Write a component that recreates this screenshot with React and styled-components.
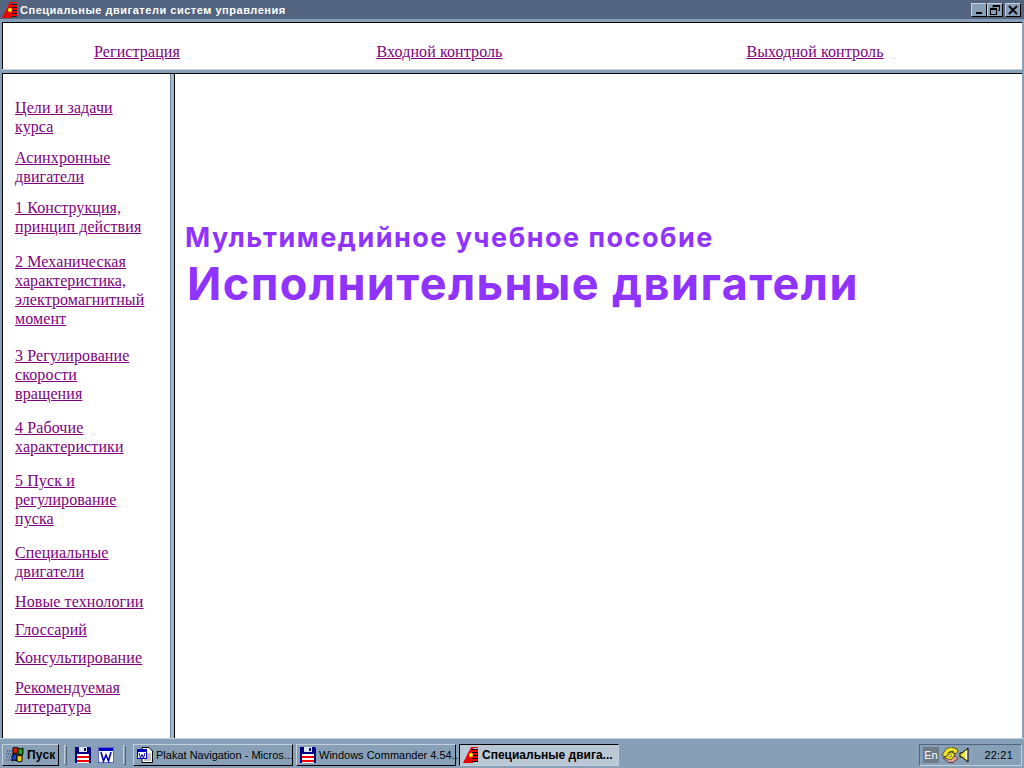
import React from 'react';
import styled, { createGlobalStyle } from 'styled-components';

const GlobalStyle = createGlobalStyle`
  html, body {
    margin: 0;
    padding: 0;
    overflow: hidden;
    background: #87a0b8;
  }
  svg {
    flex: none;
    display: block;
  }
`;

const Screen = styled.div`
  width: 1024px;
  height: 768px;
  display: flex;
  flex-direction: column;
  background: #87a0b8;
  overflow: hidden;
`;

const TitleBar = styled.div`
  height: 19px;
  flex: none;
  display: flex;
  align-items: center;
  padding: 0 3px 0 2px;
  background: #52647f;
  color: #fff;
  font: bold 11px "Liberation Sans", sans-serif;
  letter-spacing: 0.52px;
`;

const TitleText = styled.span`
  margin-left: 2px;
  flex: 1;
`;

const WinButton = styled.div`
  width: 16px;
  height: 14px;
  margin-left: ${(p) => p.$gap || 0}px;
  background: #87a0b8;
  box-sizing: border-box;
  border: 1px solid;
  border-color: #c4d0dc #000 #000 #c4d0dc;
  display: flex;
  align-items: center;
  justify-content: center;
`;

const Frame = styled.div`
  flex: 1;
  display: flex;
  flex-direction: column;
  padding: 0 2px;
  min-height: 0;
`;

const TopFrame = styled.div`
  height: 46px;
  flex: none;
  margin-top: 3px;
  background: #fff;
  border-top: 1px solid #000;
  border-left: 1px solid #000;
  display: grid;
  grid-template-columns: 268px 337px 1fr;
  align-items: center;
`;

const TopCell = styled.div`
  text-align: center;
  padding-top: 11px;
  font: 16px/19px "Liberation Serif", serif;
`;

const HDivider = styled.div`
  height: 3px;
  flex: none;
  background: #87a0b8;
  border-top: 1px solid #c4d0dc;
  border-bottom: 1px solid #000;
`;

const Panes = styled.div`
  flex: 1;
  display: flex;
  min-height: 0;
`;

const SidePane = styled.nav`
  width: 168px;
  flex: none;
  background: #fff;
  border-left: 1px solid #000;
  padding: 24px 0 0 12px;
  box-sizing: border-box;
`;

const VDivider = styled.div`
  width: 5px;
  flex: none;
  box-sizing: border-box;
  background: #a6b9cb;
  border-left: 1px solid #6f88a2;
  border-right: 1px solid #000;
`;

const MainPane = styled.main`
  flex: 1;
  background: #fff;
  padding-top: 148px;
`;

const NavItem = styled.div`
  margin-top: ${(p) => p.$gap}px;
  font: 16px/19px "Liberation Serif", serif;
`;

const NavLink = styled.a`
  color: #800080;
  text-decoration: underline;
  letter-spacing: 0.1px;
  cursor: pointer;
`;

const Subtitle = styled.div`
  margin-left: 10px;
  color: #9133ff;
  font: 700 27px/32px Inter, sans-serif;
  letter-spacing: 1.5px;
  white-space: nowrap;
`;

const Heading = styled.div`
  margin-left: 12px;
  color: #9133ff;
  font: 700 45px/60px Inter, sans-serif;
  letter-spacing: 1.45px;
  white-space: nowrap;
`;

const TaskBar = styled.div`
  height: 30px;
  flex: none;
  display: flex;
  align-items: center;
  box-sizing: border-box;
  padding: 3px 2px 1px;
  background: #87a0b8;
  border-top: 1px solid #c4d0dc;
  font: 11px "Liberation Sans", sans-serif;
  color: #000;
`;

const TaskButton = styled.div`
  height: 22px;
  width: ${(p) => p.$w}px;
  margin-left: ${(p) => p.$gap || 0}px;
  flex: none;
  display: flex;
  align-items: center;
  gap: 3px;
  box-sizing: border-box;
  padding: 0 3px;
  border: 1px solid;
  border-color: ${(p) => (p.$active ? '#000 #c4d0dc #c4d0dc #000' : '#c4d0dc #000 #000 #c4d0dc')};
  background: ${(p) => (p.$active ? '#bac7d5' : '#87a0b8')};
  font-weight: ${(p) => (p.$active ? 'bold' : 'normal')};
  font-size: ${(p) => (p.$active ? 12 : 11)}px;
  white-space: nowrap;
`;

const StartLabel = styled.b`
  font-size: 12px;
  letter-spacing: 0.2px;
`;

const Grip = styled.div`
  width: 3px;
  height: 20px;
  flex: none;
  margin: 0 ${(p) => p.$right || 0}px 0 ${(p) => p.$left || 0}px;
  box-sizing: border-box;
  border: 1px solid;
  border-color: #c4d0dc #52647f #52647f #c4d0dc;
`;

const QuickGap = styled.span`
  width: 7px;
  flex: none;
`;

const Tray = styled.div`
  margin-left: auto;
  width: 103px;
  height: 22px;
  box-sizing: border-box;
  display: flex;
  align-items: center;
  padding-left: 3px;
  border: 1px solid;
  border-color: #52647f #c4d0dc #c4d0dc #52647f;
`;

const Lang = styled.span`
  width: 16px;
  height: 16px;
  background: #6f7a88;
  color: #fff;
  font-size: 11px;
  line-height: 16px;
  text-align: center;
  margin-right: 2px;
`;

const Clock = styled.span`
  margin-left: auto;
  margin-right: 8px;
  font-size: 11px;
  letter-spacing: 0.2px;
`;

const AppIcon = ({ stripes = '#000' }) => (
  <svg width="16" height="16" viewBox="0 0 16 16">
    <path d="M0 16 L8 0 H15 V1 H10 V16 Z" fill="#f00000" />
    <path d="M10 3h5v2H10zM10 6h5v2H10zM10 9h5v2H10zM10 12h5v2H10z" fill="#f00000" />
    <path d="M9 2h6v1H9zM9 5h6v1H9zM9 8h6v1H9zM9 11h6v1H9zM9 14h6v1H9z" fill={stripes} />
    <rect x="6" y="6" width="4" height="4" rx="2" fill="#ffff00" />
  </svg>
);

const Floppy = () => (
  <svg width="16" height="16" viewBox="0 0 16 16">
    <path d="M0 0h15l1 1v15H0z" fill="#000080" />
    <rect x="4" y="0" width="8" height="5" fill="#dfe6ee" />
    <rect x="9" y="1" width="2" height="3" fill="#000080" />
    <rect x="2" y="7" width="12" height="9" fill="#fff" />
    <rect x="2" y="9" width="12" height="2" fill="#f00000" />
    <rect x="2" y="13" width="12" height="2" fill="#f00000" />
  </svg>
);

const WordIcon = () => (
  <svg width="16" height="16" viewBox="0 0 16 16">
    <rect x="0.5" y="0.5" width="15" height="15" fill="#fff" stroke="#0000c0" strokeDasharray="1 1" />
    <rect x="1" y="1" width="14" height="3" fill="#0000c0" />
    <path d="M3 5l2.5 9L8 8l2.5 6L13 5" fill="none" stroke="#0000c0" strokeWidth="1.6" />
  </svg>
);

const WordDoc = () => (
  <svg width="16" height="16" viewBox="0 0 16 16">
    <path d="M5 0.5h7l3.5 3.5v11.5H5z" fill="#fff" stroke="#000" />
    <path d="M7 7h7M7 9h7M7 11h7M7 13h7" stroke="#808080" />
    <rect x="0.5" y="2.5" width="9" height="9" fill="#fff" stroke="#0000c0" />
    <rect x="1" y="3" width="8" height="2" fill="#0000c0" />
    <path d="M2 6l1.5 5L5 7.5 6.5 11 8 6" fill="none" stroke="#0000c0" />
  </svg>
);

const StartIcon = () => (
  <svg width="18" height="16" viewBox="0 0 18 16">
    <path d="M7 1q3-2 5 0v6q-3-2-5 0z" fill="#d81e05" stroke="#000" />
    <path d="M12 1q3 2 5 0v6q-2 2-5 0z" fill="#1fa01f" stroke="#000" />
    <path d="M6 8q3-2 5 0v6q-3-2-5 0z" fill="#1f3fd8" stroke="#000" />
    <path d="M11 8q3 2 5 0v6q-2 2-5 0z" fill="#f0d000" stroke="#000" />
    <path d="M1 4h5M0 7h5M1 10h4M0 13h5" stroke="#303060" strokeDasharray="1 1" />
  </svg>
);

const PhoneIcon = () => (
  <svg width="18" height="16" viewBox="0 0 18 16">
    <path d="M2 11l6 4.5h4l5-4-2-2-7-1z" fill="#e8a0a8" stroke="#402020" strokeWidth="0.8" />
    <path d="M4 11l2-5 5-1 3 3-4 5z" fill="#f0e430" stroke="#404000" strokeWidth="0.8" />
    <path d="M1 8l4-6 5-2 6 2 1 3-3 2-2-3-4 1-3 5z" fill="#f0e430" stroke="#404000" strokeWidth="0.8" />
    <circle cx="9" cy="8.5" r="1.5" fill="#fff8a0" stroke="#404000" strokeWidth="0.6" />
  </svg>
);

const SpeakerIcon = () => (
  <svg width="16" height="16" viewBox="0 0 16 16">
    <path d="M1 6h2l6-5v14L3 10H1z" fill="#f0e430" stroke="#000" />
    <rect x="6" y="4" width="2" height="8" fill="#fff" />
    <path d="M11 5l3-2M11 8h4M11 11l3 2" stroke="#a0a8c0" />
  </svg>
);

const Minimize = () => (
  <svg width="10" height="10" viewBox="0 0 10 10"><rect x="2" y="7" width="6" height="2" fill="#000" /></svg>
);

const Restore = () => (
  <svg width="10" height="10" viewBox="0 0 10 10">
    <path d="M3 .5h6.5v5H8M3 .5v2" fill="none" stroke="#000" />
    <rect x="3" y="0" width="7" height="2" fill="#000" />
    <rect x=".5" y="3.5" width="6" height="6" fill="none" stroke="#000" />
    <rect x="0" y="3" width="7" height="2" fill="#000" />
  </svg>
);

const CloseX = () => (
  <svg width="10" height="10" viewBox="0 0 10 10">
    <path d="M1 1l8 8M9 1l-8 8" stroke="#000" strokeWidth="1.8" />
  </svg>
);

const navItems = [
  { gap: 0, lines: ['Цели и задачи', 'курса'] },
  { gap: 12, lines: ['Асинхронные', 'двигатели'] },
  { gap: 12, lines: ['1 Конструкция,', 'принцип действия'] },
  { gap: 16, lines: ['2 Механическая', 'характеристика,', 'электромагнитный', 'момент'] },
  { gap: 18, lines: ['3 Регулирование', 'скорости', 'вращения'] },
  { gap: 15, lines: ['4 Рабочие', 'характеристики'] },
  { gap: 15, lines: ['5 Пуск и', 'регулирование', 'пуска'] },
  { gap: 15, lines: ['Специальные', 'двигатели'] },
  { gap: 11, lines: ['Новые технологии'] },
  { gap: 9, lines: ['Глоссарий'] },
  { gap: 9, lines: ['Консультирование'] },
  { gap: 11, lines: ['Рекомендуемая', 'литература'] },
];

export default function App() {
  return (
    <Screen>
      <GlobalStyle />
      <TitleBar>
        <AppIcon stripes="#1a1a1a" />
        <TitleText>Специальные двигатели систем управления</TitleText>
        <WinButton><Minimize /></WinButton>
        <WinButton><Restore /></WinButton>
        <WinButton $gap={2}><CloseX /></WinButton>
      </TitleBar>
      <Frame>
        <TopFrame>
          <TopCell><NavLink>Регистрация</NavLink></TopCell>
          <TopCell><NavLink>Входной контроль</NavLink></TopCell>
          <TopCell><NavLink>Выходной контроль</NavLink></TopCell>
        </TopFrame>
        <HDivider />
        <Panes>
          <SidePane>
            {navItems.map((item) => (
              <NavItem key={item.lines[0]} $gap={item.gap}>
                {item.lines.map((line) => (
                  <div key={line}><NavLink>{line}</NavLink></div>
                ))}
              </NavItem>
            ))}
          </SidePane>
          <VDivider />
          <MainPane>
            <Subtitle>Мультимедийное учебное пособие</Subtitle>
            <Heading>Исполнительные двигатели</Heading>
          </MainPane>
        </Panes>
      </Frame>
      <TaskBar>
        <TaskButton $w={57}><StartIcon /><StartLabel>Пуск</StartLabel></TaskButton>
        <Grip $left={5} $right={8} />
        <Floppy />
        <QuickGap />
        <WordIcon />
        <Grip $left={9} $right={7} />
        <TaskButton $w={160}><WordDoc />Plakat Navigation - Micros...</TaskButton>
        <TaskButton $w={160} $gap={3}><Floppy />Windows Commander 4.54...</TaskButton>
        <TaskButton $w={160} $gap={3} $active><AppIcon />Специальные двига...</TaskButton>
        <Tray>
          <Lang>En</Lang>
          <PhoneIcon />
          <SpeakerIcon />
          <Clock>22:21</Clock>
        </Tray>
      </TaskBar>
    </Screen>
  );
}
